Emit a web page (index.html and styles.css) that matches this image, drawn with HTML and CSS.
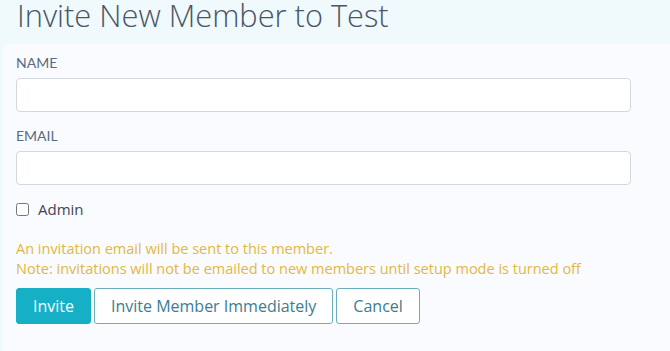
FILE: index.html
```html
<!DOCTYPE html>
<html lang="en">
<head>
    <meta charset="UTF-8">
    <meta name="viewport" content="width=device-width, initial-scale=1.0">
    <title>Invite New Member</title>
    <link rel="stylesheet" href="styles.css">
</head>
<body>
    <h1 class="page-title">Invite New Member to Test</h1>
    <div class="card">
        <div class="field">
            <label class="field-label" for="name">Name</label>
            <input class="text-input" type="text" id="name">
        </div>
        <div class="field">
            <label class="field-label" for="email">Email</label>
            <input class="text-input" type="email" id="email">
        </div>
        <label class="check-row">
            <input type="checkbox" class="check-box">
            <span>Admin</span>
        </label>
        <div class="notes">
            <p>An invitation email will be sent to this member.</p>
            <p>Note: invitations will not be emailed to new members until setup mode is turned off</p>
        </div>
        <div class="actions">
            <button class="btn btn-primary">Invite</button>
            <button class="btn btn-outline">Invite Member Immediately</button>
            <button class="btn btn-outline">Cancel</button>
        </div>
    </div>
</body>
</html>
```

FILE: styles.css
```css
body {
    margin: 0;
    background: #f0f9fc;
    font-family: "Open Sans", Arial, sans-serif;
    color: #3c4a5c;
}
.page-title {
    margin: 0;
    padding: 0 17px;
    height: 44px;
    font-size: 30.8px;
    font-weight: 300;
    line-height: 30px;
    color: #4a5566;
}
.card {
    margin-left: 3px;
    background: #f9fbfe;
    border-radius: 7px 0 0 0;
    padding: 10px 39px 26px 13px;
    min-height: 271px;
}
.field {
    margin-bottom: 15px;
}
.field-label {
    display: block;
    font-family: Lato, Arial, sans-serif;
    font-size: 14px;
    line-height: 17px;
    text-transform: uppercase;
    color: #5b6a80;
    margin-bottom: 7px;
}
.text-input {
    display: block;
    box-sizing: border-box;
    width: 100%;
    height: 34px;
    border: 1px solid #d3d7de;
    border-radius: 4px;
    background: #fff;
}
.check-row {
    display: flex;
    align-items: center;
    gap: 9px;
    font-size: 15px;
    line-height: 19px;
    color: #3e4756;
}
.check-box {
    margin: 0;
    width: 13px;
    height: 13px;
}
.notes {
    margin-top: 20px;
    color: #e2b843;
    font-size: 14.5px;
    line-height: 20px;
}
.notes p {
    margin: 0;
}
.actions {
    display: flex;
    gap: 3px;
    margin-top: 9px;
}
.btn {
    height: 36px;
    padding: 0 16px;
    border-radius: 3px;
    font-family: "Open Sans", Arial, sans-serif;
    font-size: 16px;
    cursor: pointer;
}
.btn-primary {
    background: #16b0c6;
    border: 1px solid #16b0c6;
    color: #fff;
}
.btn-outline {
    background: #fff;
    border: 1px solid #6aaebd;
    color: #3a7d92;
}
```
